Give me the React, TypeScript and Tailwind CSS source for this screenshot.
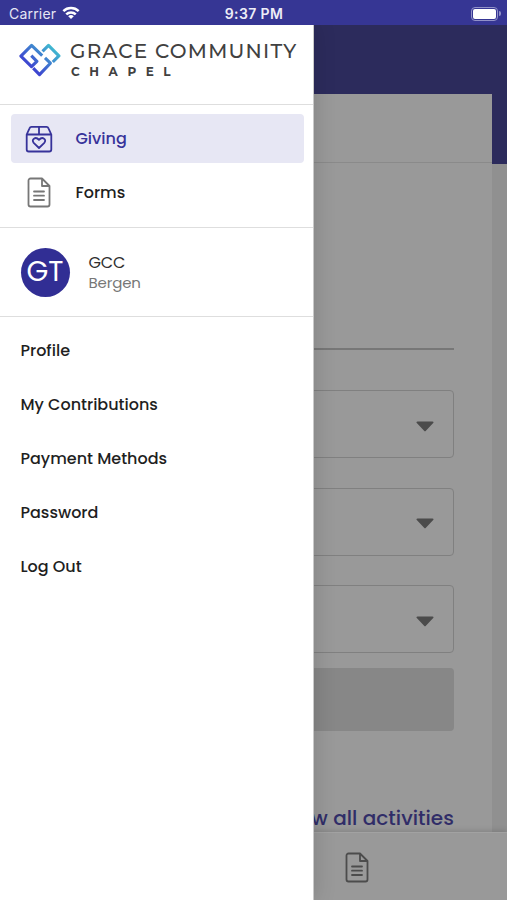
const accountLinks = ['Profile', 'My Contributions', 'Payment Methods', 'Password', 'Log Out'];

function DocumentIcon({ className }: { className: string }) {
  return (
    <svg viewBox="0 0 24 31" fill="none" stroke="currentColor" strokeWidth="1.8" strokeLinejoin="round" strokeLinecap="round" className={className}>
      <path d="M15 1.5H3.5a2 2 0 0 0-2 2v24a2 2 0 0 0 2 2h17a2 2 0 0 0 2-2V9L15 1.5V9h7.5" />
      <path d="M7 14.5h10M7 18.7h10M7 23h10" />
    </svg>
  );
}

function GivingIcon() {
  return (
    <svg viewBox="0 0 28 28" fill="none" stroke="currentColor" strokeWidth="1.8" strokeLinejoin="round" strokeLinecap="round" className="h-7 w-7">
      <path d="M1.7 9.5v15a2 2 0 0 0 2 2h20.6a2 2 0 0 0 2-2v-15l-2.8-6.2a2.3 2.3 0 0 0-2-1.4h-15a2.3 2.3 0 0 0-2 1.4L1.7 9.5h24.6M14 1.9v7.6" />
      <path d="m14 23-5.3-5.1c-2.9-3.3 1.8-7 5.3-3 3.5-4 8.2-.3 5.3 3L14 23z" />
    </svg>
  );
}

function LogoMark() {
  return (
    <svg viewBox="0 0 42 36" fill="none" stroke="url(#mark)" strokeWidth="3.1" strokeLinejoin="round" className="h-9 w-[42px]">
      <defs>
        <linearGradient id="mark" gradientUnits="userSpaceOnUse" x1="12" y1="29" x2="33" y2="5">
          <stop offset="0" stopColor="#3d3bd0" />
          <stop offset="0.5" stopColor="#4076cf" />
          <stop offset="1" stopColor="#40b8d0" />
        </linearGradient>
      </defs>
      <path d="M23.2 13.7 12.6 3.4 1.9 14.1l10.6 10.5 5.4-5.3-5.6-5.6" />
      <path d="m23.5 9.3 6-5.9 10.4 10.5-6.1 6.1" />
      <path d="m26 15.9 5.4 5.3-10.9 11.4-6.3-6.4" />
    </svg>
  );
}

function SelectField() {
  return (
    <div className="flex h-[68px] items-center justify-end rounded border border-[#808080] pr-[19px]">
      <svg viewBox="0 0 18 11" className="mt-1 h-[11px] w-[18px]" fill="#4b4b4b">
        <path d="M1.5.5h15c1 0 1.4 1 .7 1.6l-7.3 7.7a1.2 1.2 0 0 1-1.8 0L.8 2.1C.1 1.5.5.5 1.5.5z" />
      </svg>
    </div>
  );
}

function StatusBar() {
  return (
    <header className="grid h-[25px] shrink-0 grid-cols-3 items-center bg-[#363694] pl-[9px] pr-[6px] pt-[2px] font-[Inter,sans-serif] text-white">
      <div className="flex items-center gap-[6px] text-[14px] tracking-[0.2px] text-[#e6e6f4]">
        <span>Carrier</span>
        <svg viewBox="0 0 20 15" className="mb-[2px] h-[14px] w-[18px]" fill="none" stroke="white" strokeWidth="2.8">
          <path d="M1.5 5.5a12.2 12.2 0 0 1 17 0M4.7 9a7.6 7.6 0 0 1 10.6 0" />
          <path d="m6.9 11.2 3.1 3.1 3.1-3.1a4.5 4.5 0 0 0-6.2 0z" fill="white" stroke="none" />
        </svg>
      </div>
      <span className="whitespace-nowrap pr-[2px] text-center text-[14px] font-semibold tracking-[0.4px] text-[#ededf7]">9:37 PM</span>
      <div className="flex items-center justify-end gap-px">
        <div className="h-[14px] w-[27px] rounded-[4px] border border-[#9292c8] p-px">
          <div className="h-full rounded-[2px] bg-white" />
        </div>
        <div className="h-[5px] w-[2px] rounded-r bg-[#9292c8]" />
      </div>
    </header>
  );
}

function GivingPage() {
  return (
    <main className="flex h-full flex-col bg-[linear-gradient(#2c2b5c_139px,#909090_139px)]">
      <section className="mr-[15px] mt-[69px] h-[738px] shrink-0 bg-[#999999]">
        <div className="h-[69px] border-b border-[#8a8a8a]" />
        <div className="mr-[38px] flex flex-col">
          <div className="h-[187px] border-b-2 border-[#777777]" />
          <div className="mt-10 flex flex-col gap-[29.7px]">
            <SelectField />
            <SelectField />
            <SelectField />
          </div>
          <div className="mt-[14.6px] h-[63px] rounded bg-[#878787]" />
          <a className="mt-[72px] whitespace-nowrap text-right text-[20px] font-medium leading-[30px] tracking-[0.05px] text-[#302d68]">View all activities</a>
        </div>
      </section>
      <nav className="relative flex grow items-center border-t border-[#a2a2a2] bg-[#999999] pl-[345px] pt-px shadow-[0_-2px_5px_rgba(0,0,0,0.12)]">
        <DocumentIcon className="h-[31px] w-6 text-[#4c4c4c]" />
      </nav>
    </main>
  );
}

function Drawer() {
  return (
    <aside className="absolute inset-y-0 left-0 w-[314px] border-r border-[#c9c9c9] bg-white shadow-[1px_0_20px_rgba(0,0,0,0.15)]">
      <div className="flex h-[80px] gap-[9px] border-b border-[#dedede] pl-[19px] pt-[17px]">
        <LogoMark />
        <div className="font-[Montserrat,Lato,sans-serif] text-[#414141]">
          <div className="whitespace-nowrap text-[20px] font-medium leading-[18px] tracking-[1.25px]">GRACE COMMUNITY</div>
          <div className="ml-px mt-[6px] whitespace-nowrap text-[12px] font-bold leading-[12px] tracking-[9.6px]">CHAPEL</div>
        </div>
      </div>
      <div className="h-[123px] border-b border-[#dedede] pl-[10.5px] pr-[9px] pt-[9px] text-[16px] font-medium">
        <div className="flex h-[49px] items-center rounded bg-[#e7e7f4] pl-[14.5px] text-[#37339a]">
          <GivingIcon />
          <span className="ml-[22.5px]">Giving</span>
        </div>
        <div className="mt-[5px] flex h-[49px] items-center pl-[16.5px] text-[#1f1f1f]">
          <DocumentIcon className="h-[31px] w-6 text-[#777777]" />
          <span className="ml-[24.5px]">Forms</span>
        </div>
      </div>
      <div className="flex h-[89px] items-center gap-[19px] border-b border-[#dedede] pl-[20.5px]">
        <div className="flex h-[49px] w-[49px] items-center justify-center rounded-full bg-[#312e94] text-[28px] text-white">GT</div>
        <div className="pt-px text-[15px] leading-5">
          <div className="text-[16px] tracking-[-0.1px] text-[#303030]">GCC</div>
          <div className="tracking-[-0.15px] text-[#777777]">Bergen</div>
        </div>
      </div>
      <ul className="pt-[7.5px] text-[16px] font-medium text-[#1f1f1f]">
        {accountLinks.map((link) => (
          <li key={link} className="flex h-[53.8px] items-center pl-[20.5px]">{link}</li>
        ))}
      </ul>
    </aside>
  );
}

export default function App() {
  return (
    <div className="flex h-[900px] w-[507px] flex-col overflow-hidden font-[Poppins,Inter,sans-serif]">
      <StatusBar />
      <div className="relative h-[875px] overflow-hidden">
        <GivingPage />
        <Drawer />
      </div>
    </div>
  );
}
